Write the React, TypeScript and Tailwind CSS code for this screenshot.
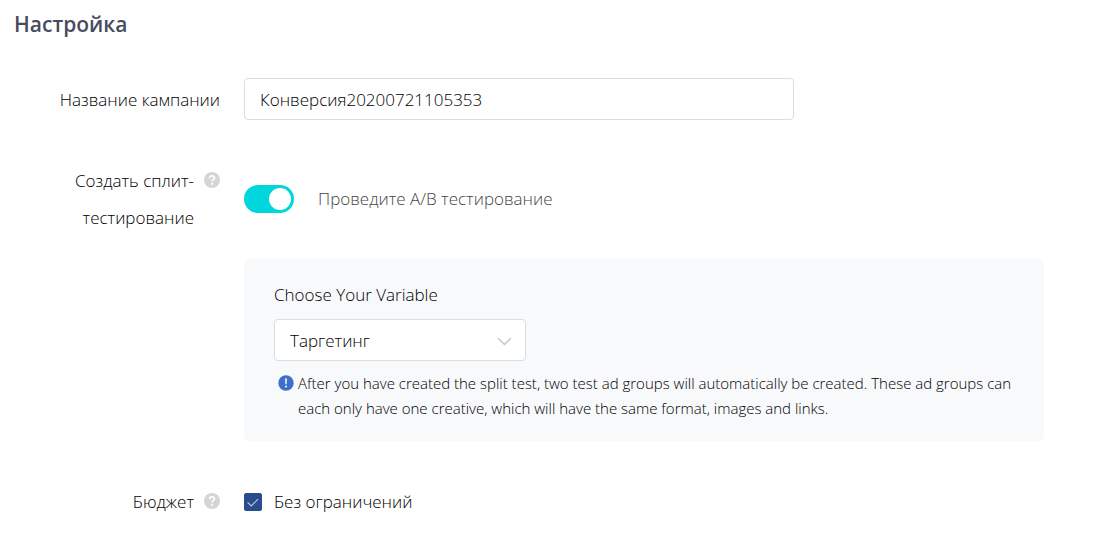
import { useState } from 'react';
import type { ReactNode } from 'react';
import { clsx } from 'clsx';

interface FormRowProps {
  label: string;
  htmlFor: string;
  help?: boolean;
  children: ReactNode;
}

function HelpIcon() {
  return (
    <button type="button" aria-label="?" className="flex h-9 shrink-0 items-center">
      <svg width="16" height="16" viewBox="0 0 16 16" fill="none">
        <circle cx="8" cy="8" r="8" fill="#d5d5d5" />
        <path
          d="M5.6 6.2C5.6 4.7 6.6 3.9 8 3.9s2.4.8 2.4 2.1c0 1.7-2.3 1.7-2.3 3.5"
          stroke="#fff"
          strokeWidth="1.7"
        />
        <circle cx="8.1" cy="11.8" r="1.1" fill="#fff" />
      </svg>
    </button>
  );
}

function InfoIcon() {
  return (
    <svg className="mt-1 shrink-0" width="16" height="16" viewBox="0 0 16 16">
      <circle cx="8" cy="8" r="7.7" fill="#3f70c7" />
      <path d="M7.1 3.4h1.8l-.3 5.8H7.4z" fill="#fff" />
      <circle cx="8" cy="11.6" r="1" fill="#fff" />
    </svg>
  );
}

function FormRow({ label, htmlFor, help, children }: FormRowProps) {
  return (
    <div className="flex items-center gap-6">
      <div className="flex w-[220px] shrink-0 items-start justify-end gap-2.5">
        <label
          htmlFor={htmlFor}
          className={clsx('text-right leading-[37px]', help ? 'w-32' : 'whitespace-nowrap')}
        >
          {label}
        </label>
        {help && <HelpIcon />}
      </div>
      <div className="flex min-w-0 flex-1 items-center">{children}</div>
    </div>
  );
}

export default function App() {
  const [name, setName] = useState('Конверсия20200721105353');
  const [split, setSplit] = useState(true);
  const [unlimited, setUnlimited] = useState(true);

  return (
    <main className="min-h-screen bg-white pb-8 font-['Open_Sans','Noto_Sans',sans-serif] text-[17px] font-light text-black">
      <h1 className="px-3.5 pt-1.5 text-[21px] leading-9 font-semibold text-[#464c5e]">Настройка</h1>

      <form className="mt-9">
        <FormRow label="Название кампании" htmlFor="name">
          <input
            id="name"
            type="text"
            value={name}
            onChange={(e) => setName(e.target.value)}
            className="h-[42px] w-full max-w-[550px] rounded border border-[#d8dde3] bg-white px-[15px] outline-none"
          />
        </FormRow>

        <div className="mt-[42px]">
          <FormRow label="Создать сплит-тестирование" htmlFor="split" help>
            <input
              id="split"
              type="checkbox"
              role="switch"
              checked={split}
              onChange={(e) => setSplit(e.target.checked)}
              className="flex h-7 w-[50px] shrink-0 appearance-none items-center rounded-full bg-gray-300 px-[3px] before:size-[22px] before:rounded-full before:bg-white checked:justify-end checked:bg-[#00d7dc]"
            />
            <label htmlFor="split" className="ml-6 text-[#444]">
              Проведите A/B тестирование
            </label>
          </FormRow>
        </div>

        {split && (
          <div className="mt-[23px] pl-[244px]">
            <section className="max-w-[800px] rounded-md bg-[#f8f9fb] px-[30px] pt-5 pb-5">
              <label htmlFor="variable" className="block leading-8">
                Choose Your Variable
              </label>
              <div className="relative mt-2 max-w-[252px]">
                <select
                  id="variable"
                  className="h-[42px] w-full appearance-none rounded border border-[#d8dde3] bg-white px-[15px] pt-0.5 outline-none"
                >
                  <option>Таргетинг</option>
                </select>
                <svg
                  className="pointer-events-none absolute top-[18px] right-3.5"
                  width="15"
                  height="9"
                  viewBox="0 0 15 9"
                  fill="none"
                  stroke="#c0c4cc"
                  strokeWidth="1.4"
                >
                  <path d="M1.2 1.2l6.3 6.3 6.3-6.3" />
                </svg>
              </div>
              <div className="mt-2.5 flex gap-1 pl-1 text-[15px] leading-[25px]">
                <InfoIcon />
                <p>
                  After you have created the split test, two test ad groups will automatically be created. These ad
                  groups can each only have one creative, which will have the same format, images and links.
                </p>
              </div>
            </section>
          </div>
        )}

        <div className="mt-[42px]">
          <FormRow label="Бюджет" htmlFor="unlimited" help>
            <span className="relative flex">
              <input
                id="unlimited"
                type="checkbox"
                checked={unlimited}
                onChange={(e) => setUnlimited(e.target.checked)}
                className="size-[18px] appearance-none rounded-xs border border-[#2b4c8c] bg-white checked:bg-[#2b4c8c]"
              />
              <svg
                className="pointer-events-none absolute inset-0"
                width="18"
                height="18"
                viewBox="0 0 18 18"
                fill="none"
                stroke="#c3cbdb"
                strokeWidth="1.1"
              >
                <path d="M3.6 9.4l3.6 3.6 6.8-6.8" />
              </svg>
            </span>
            <label htmlFor="unlimited" className="ml-3">
              Без ограничений
            </label>
          </FormRow>
        </div>
      </form>
    </main>
  );
}
